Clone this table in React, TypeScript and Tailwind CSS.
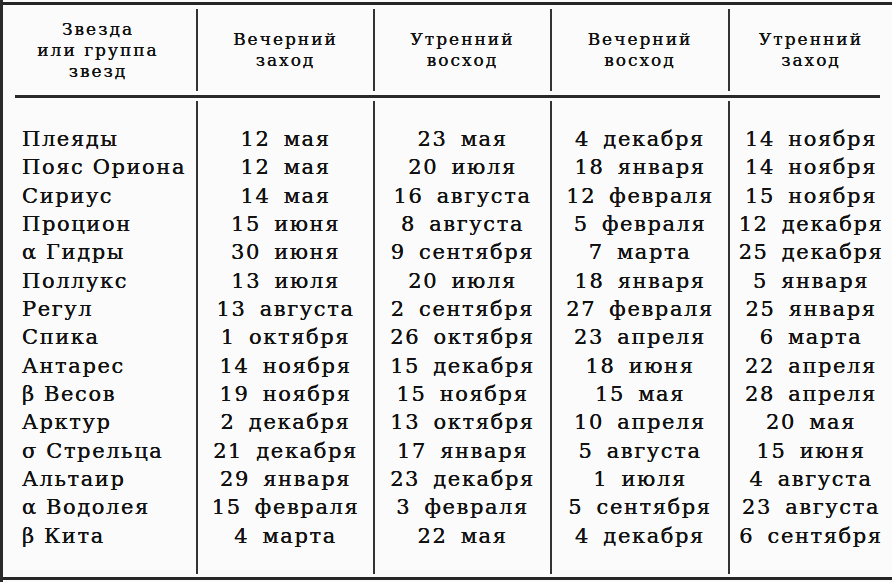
import React from 'react';

type Row = { name: string; dates: [string, string, string, string] };

const rows: Row[] = [
  { name: 'Плеяды', dates: ['12 мая', '23 мая', '4 декабря', '14 ноября'] },
  { name: 'Пояс Ориона', dates: ['12 мая', '20 июля', '18 января', '14 ноября'] },
  { name: 'Сириус', dates: ['14 мая', '16 августа', '12 февраля', '15 ноября'] },
  { name: 'Процион', dates: ['15 июня', '8 августа', '5 февраля', '12 декабря'] },
  { name: 'α Гидры', dates: ['30 июня', '9 сентября', '7 марта', '25 декабря'] },
  { name: 'Поллукс', dates: ['13 июля', '20 июля', '18 января', '5 января'] },
  { name: 'Регул', dates: ['13 августа', '2 сентября', '27 февраля', '25 января'] },
  { name: 'Спика', dates: ['1 октября', '26 октября', '23 апреля', '6 марта'] },
  { name: 'Антарес', dates: ['14 ноября', '15 декабря', '18 июня', '22 апреля'] },
  { name: 'β Весов', dates: ['19 ноября', '15 ноября', '15 мая', '28 апреля'] },
  { name: 'Арктур', dates: ['2 декабря', '13 октября', '10 апреля', '20 мая'] },
  { name: 'σ Стрельца', dates: ['21 декабря', '17 января', '5 августа', '15 июня'] },
  { name: 'Альтаир', dates: ['29 января', '23 декабря', '1 июля', '4 августа'] },
  { name: 'α Водолея', dates: ['15 февраля', '3 февраля', '5 сентября', '23 августа'] },
  { name: 'β Кита', dates: ['4 марта', '22 мая', '4 декабря', '6 сентября'] },
];

const headers: string[][] = [
  ['Звезда', 'или группа', 'звезд'],
  ['Вечерний', 'заход'],
  ['Утренний', 'восход'],
  ['Вечерний', 'восход'],
  ['Утренний', 'заход'],
];

const cols = 'grid grid-cols-[198px_177px_177px_178px_162px]';

export default function App() {
  return (
    <div
      className="w-[892px] h-[582px] bg-[#fbfbfb] text-[#111] overflow-hidden border-l-[3px] border-[#2a2a2a] flex flex-col [text-shadow:0_0_0.5px_#000]"
      style={{ fontFamily: '"DejaVu Serif", "Liberation Serif", serif' }}
    >
      <div className="mt-[2px] h-[3px] bg-[#262626]" />

      {/* header */}
      <div className={`${cols} h-[90px] -ml-[3px]`}>
        {headers.map((lines, i) => (
          <div
            key={i}
            className={`flex flex-col items-center justify-center my-[4px] text-[17px] leading-[21px] tracking-[2px] ${
              i < 4 ? 'border-r-2 border-[#333]' : ''
            }`}
          >
            {lines.map((l) => (
              <span key={l}>{l}</span>
            ))}
          </div>
        ))}
      </div>
      <div className="ml-[12px] mr-[12px] h-[3px] bg-[#2a2a2a]" />

      {/* body */}
      <div className={`${cols} -ml-[3px] flex-1`}>
        {[0, 1, 2, 3, 4].map((c) => (
          <div
            key={c}
            className={`flex flex-col pt-[24px] my-[3px] text-[21px] leading-[28.35px] tracking-[1.6px] [word-spacing:5px] ${
              c === 0 ? 'items-start pl-[22px]' : 'items-center'
            } ${c < 4 ? 'border-r-2 border-[#333]' : ''}`}
          >
            {rows.map((r) => (
              <span key={r.name} className={`whitespace-nowrap ${c === 0 ? '[word-spacing:0px]' : ''}`}>
                {c === 0 ? r.name : r.dates[c - 1]}
              </span>
            ))}
          </div>
        ))}
      </div>
      <div className="h-[3px] bg-[#262626] mb-[2px]" />
    </div>
  );
}
